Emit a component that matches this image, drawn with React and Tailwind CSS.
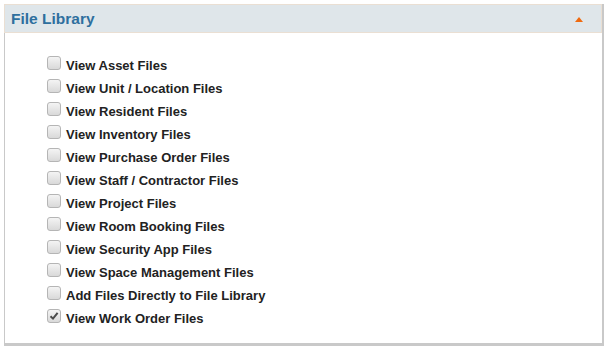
import React from "react";

const items = [
  "View Asset Files",
  "View Unit / Location Files",
  "View Resident Files",
  "View Inventory Files",
  "View Purchase Order Files",
  "View Staff / Contractor Files",
  "View Project Files",
  "View Room Booking Files",
  "View Security App Files",
  "View Space Management Files",
  "Add Files Directly to File Library",
  "View Work Order Files",
];

function Box({ checked }) {
  return (
    <span className="mt-[-6px] flex h-[14px] w-[14px] shrink-0 items-center justify-center rounded-[3px] border border-[#b5b5b5] bg-gradient-to-b from-[#f4f4f4] to-[#d9d9d9]">
      {checked && (
        <svg width="10" height="10" viewBox="0 0 10 10">
          <path d="M1.5 5.2 L4 7.6 L8.6 1.8" fill="none" stroke="#4a4a4a" strokeWidth="2" />
        </svg>
      )}
    </span>
  );
}

export default function App() {
  return (
    <div className="h-[349px] w-[606px] bg-white pt-[4px] pl-[4px] font-['Liberation_Sans',Arial,sans-serif]">
      <div className="flex h-[342px] w-[600px] flex-col border-r-2 border-b-[3px] border-[#c9c9c9]">
        <div className="flex h-[29px] items-center justify-between border border-[#eadfd3] bg-[#dfe6ea] pl-[6px] pr-[18px]">
          <span className="text-[15.5px] font-bold text-[#2e6f9e]">File Library</span>
          <span className="mt-[2px] h-0 w-0 border-x-[4px] border-b-[5px] border-x-transparent border-b-[#f06a0f]" />
        </div>
        <div className="flex flex-1 flex-col border-l border-[#c9c9c9] pl-[42px] pt-[21px]">
          {items.map((t, i) => (
            <label key={t} className="flex h-[23px] items-center gap-[5px]">
              <Box checked={i === items.length - 1} />
              <span className="text-[13px] font-bold text-[#222]">{t}</span>
            </label>
          ))}
        </div>
      </div>
    </div>
  );
}
